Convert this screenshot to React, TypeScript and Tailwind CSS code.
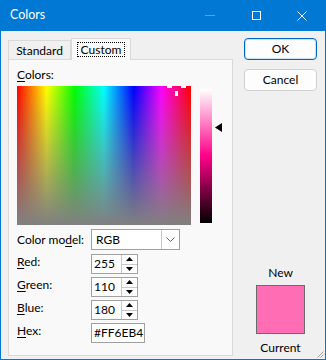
const font = { fontFamily: 'Lato, "Noto Sans", sans-serif' };

function Ul({ k, rest }: { k: string; rest: string }) {
  return (
    <span>
      <span className="underline underline-offset-2">{k}</span>
      {rest}
    </span>
  );
}

function SpinBox({ value }: { value: string }) {
  return (
    <div className="flex h-[20px] w-[47px] border border-[#a0a0a0] bg-white">
      <div className="flex-1 pl-[2px] leading-[18px]">{value}</div>
      <div className="flex w-[16px] flex-col border-l border-[#c8c8c8]">
        <div className="flex flex-1 items-center justify-center border-b border-[#c8c8c8]">
          <svg width="7" height="4" viewBox="0 0 7 4">
            <path d="M0 4 L3.5 0 L7 4 Z" fill="#000" />
          </svg>
        </div>
        <div className="flex flex-1 items-center justify-center">
          <svg width="7" height="4" viewBox="0 0 7 4">
            <path d="M0 0 L3.5 4 L7 0 Z" fill="#000" />
          </svg>
        </div>
      </div>
    </div>
  );
}

function FieldRow({ label, children }: { label: React.ReactNode; children: React.ReactNode }) {
  return (
    <div className="flex items-start">
      <div className="w-[74px] leading-[16px]">{label}</div>
      {children}
    </div>
  );
}

export default function App() {
  return (
    <div
      className="flex h-[360px] w-[326px] flex-col border-x border-b border-[#0078d4] bg-[#f0f0f0] text-[12px] text-black"
      style={font}
    >
      {/* title bar */}
      <div className="flex h-[31px] shrink-0 items-center bg-[#0078d4] text-white">
        <span className="ml-[9px] flex-1 text-[12.5px]">Colors</span>
        <div className="flex h-full w-[46px] items-center justify-center">
          <div className="h-px w-[10px] bg-[#5aa3e0]" />
        </div>
        <div className="flex h-full w-[46px] items-center justify-center">
          <div className="h-[9px] w-[9px] border border-white" />
        </div>
        <div className="flex h-full w-[46px] items-center justify-center">
          <svg width="10" height="10" viewBox="0 0 10 10">
            <path d="M0.5 0.5 L9.5 9.5 M9.5 0.5 L0.5 9.5" stroke="#fff" strokeWidth="1" />
          </svg>
        </div>
      </div>

      <div className="relative flex flex-1">
        {/* left: tabs + panel */}
        <div className="ml-[7px] mt-[7px] flex w-[225px] flex-col">
          <div className="flex h-[21px] items-end">
            <div className="flex h-[19px] w-[63px] items-center justify-center border border-b-0 border-[#d9d9d9] bg-[#f0f0f0] pt-[1px]">
              Standard
            </div>
            <div className="relative z-10 -mb-px flex h-[22px] w-[60px] items-center justify-center border border-b-0 border-[#d9d9d9] bg-[#f9f9f9]">
              <span className="border border-dotted border-black px-[3px] leading-[13px]">Custom</span>
            </div>
          </div>
          <div className="relative flex h-[297px] flex-col border border-[#d9d9d9] bg-[#f9f9f9] pl-[8px]">
            <div className="mt-[7px] leading-[16px]">
              <Ul k="C" rest="olors:" />
            </div>
            <div className="mt-[3px] flex items-start">
              <div className="relative h-[139px] w-[174px]">
                <div
                  className="absolute inset-0"
                  style={{
                    background:
                      'linear-gradient(to right, #ff0000, #ffff00 17%, #00ff00 33%, #00ffff 50%, #0000ff 67%, #ff00ff 83%, #ff0000)',
                  }}
                />
                <div className="absolute inset-0 bg-gradient-to-b from-[#80808000] to-[#808080]" />
                <div className="absolute left-[150px] top-0 h-[2px] w-[5px] bg-white" />
                <div className="absolute left-[164px] top-0 h-[2px] w-[5px] bg-white" />
                <div className="absolute left-[158px] top-[5px] h-[5px] w-[3px] bg-white" />
              </div>
              <div
                className="ml-[9px] mt-[3px] h-[134px] w-[12px]"
                style={{ background: 'linear-gradient(to bottom, #ffffff, #ff0088 50%, #000000)' }}
              />
              <svg className="ml-[3px] mt-[37px]" width="7" height="9" viewBox="0 0 7 9">
                <path d="M0 4.5 L7 0 L7 9 Z" fill="#000" />
              </svg>
            </div>

            <div className="mt-[4px] flex flex-col gap-[3px]">
              <div className="mb-[1px] flex items-center">
                <div className="w-[74px]">
                  Color mo<span className="underline underline-offset-2">d</span>el:
                </div>
                <div className="flex h-[21px] w-[89px] border border-[#a0a0a0] bg-white">
                  <div className="flex-1 pl-[4px] leading-[19px]">RGB</div>
                  <div className="flex w-[18px] items-center justify-center border-l border-[#c8c8c8]">
                    <svg width="9" height="5" viewBox="0 0 9 5">
                      <path d="M0.5 0.5 L4.5 4.5 L8.5 0.5" fill="none" stroke="#606060" strokeWidth="1" />
                    </svg>
                  </div>
                </div>
              </div>
              <FieldRow label={<Ul k="R" rest="ed:" />}>
                <SpinBox value="255" />
              </FieldRow>
              <FieldRow label={<Ul k="G" rest="reen:" />}>
                <SpinBox value="110" />
              </FieldRow>
              <FieldRow label={<Ul k="B" rest="lue:" />}>
                <SpinBox value="180" />
              </FieldRow>
              <FieldRow label={<Ul k="H" rest="ex:" />}>
                <div className="h-[20px] w-[54px] border border-[#a0a0a0] bg-white pl-[2px] leading-[18px]">
                  #FF6EB4
                </div>
              </FieldRow>
            </div>
          </div>
        </div>

        {/* right column */}
        <div className="ml-[11px] mt-[7px] flex w-[73px] flex-col items-center">
          <button className="h-[22px] w-[73px] rounded-[4px] border border-[#0067c0] bg-[#fdfdfd] outline outline-1 -outline-offset-2 outline-[#0067c0]/20">
            OK
          </button>
          <button className="mt-[9px] h-[22px] w-[73px] rounded-[4px] border border-[#d0d0d0] bg-[#fdfdfd]">
            Cancel
          </button>
          <div className="mt-[174px] leading-[16px]">New</div>
          <div className="mt-[4px] h-[49px] w-[49px] border border-[#6b6b6b] bg-[#ff6eb4]" />
          <div className="mt-[6px] leading-[16px]">Current</div>
        </div>

        {/* resize grip */}
        <svg className="absolute bottom-[1px] right-[1px]" width="7" height="7" viewBox="0 0 7 7">
          <path d="M6.5 0.5 L0.5 6.5 M6.5 3.5 L3.5 6.5" stroke="#a0a0a0" strokeWidth="1" />
        </svg>
      </div>
    </div>
  );
}
